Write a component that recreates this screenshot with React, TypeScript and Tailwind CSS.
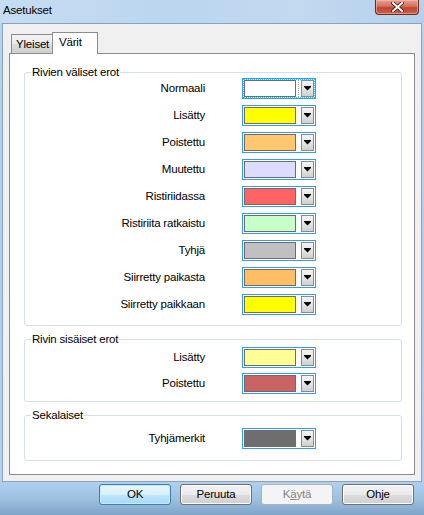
import React from 'react';

const font = "font-['Segoe_UI','Liberation_Sans',Arial,sans-serif] tracking-[-0.2px]";

type Row = { label: string; color: string };

const groups: { title: string; rows: Row[]; gap: string; mt: string; pb: string }[] = [
  {
    title: 'Rivien väliset erot',
    gap: 'gap-[6px]',
    mt: '-mt-[1px]',
    pb: 'pb-[10px]',
    rows: [
      { label: 'Normaali', color: '#ffffff' },
      { label: 'Lisätty', color: '#ffff00' },
      { label: 'Poistettu', color: '#ffc86e' },
      { label: 'Muutettu', color: '#dcdcff' },
      { label: 'Ristiriidassa', color: '#ff6464' },
      { label: 'Ristiriita ratkaistu', color: '#c8ffc8' },
      { label: 'Tyhjä', color: '#c0c0c0' },
      { label: 'Siirretty paikasta', color: '#ffbe64' },
      { label: 'Siirretty paikkaan', color: '#ffff00' },
    ],
  },
  {
    title: 'Rivin sisäiset erot',
    gap: 'gap-[5px]',
    mt: 'mt-[1px]',
    pb: 'pb-[7px]',
    rows: [
      { label: 'Lisätty', color: '#ffff96' },
      { label: 'Poistettu', color: '#c86464' },
    ],
  },
  {
    title: 'Sekalaiset',
    gap: 'gap-[5px]',
    mt: 'mt-[6px]',
    pb: 'pb-[11px]',
    rows: [{ label: 'Tyhjämerkit', color: '#6e6e6e' }],
  },
];

function ColorCombo({ color, focused }: { color: string; focused?: boolean }) {
  return (
    <div className="w-[74px] h-[21px] border border-[#3399ff] bg-white p-[1px] flex">
      <div
        className={`flex flex-1 ${focused ? 'outline outline-1 outline-dotted outline-[#33c4ff]' : ''}`}
      >
        <div className="w-[52px] h-full border border-[#6d6d6d]" style={{ background: color }} />
        <div className="w-[5px] flex justify-center">
          {focused && <div className="h-full border-l border-dotted border-[#9a9a9a]" />}
        </div>
        <div className="w-[13px] h-full border border-[#8b8b8b] bg-[linear-gradient(#f4f4f4,#e6e6e6_50%,#cfcfcf)] flex items-center justify-center">
          <svg width="7" height="5" viewBox="0 0 7 5">
            <polygon points="0,0 7,0 7,1 3.5,4.5 0,1" fill="#000" />
          </svg>
        </div>
      </div>
    </div>
  );
}

function Button({ label, primary, disabled }: { label: React.ReactNode; primary?: boolean; disabled?: boolean }) {
  const base = 'w-[72px] h-[21px] rounded-[3px] border text-[11.5px] flex items-center justify-center';
  const style = disabled
    ? 'border-[#adb2b5] bg-[#f4f4f4] text-[#838383]'
    : primary
      ? 'border-[#3c7fb1] bg-[linear-gradient(#eaf6fd,#d9f0fc_50%,#bee6fd_51%,#a7d9f5)] text-black shadow-[inset_0_0_0_1px_#c3ecfb]'
      : 'border-[#707070] bg-[linear-gradient(#f2f2f2,#ebebeb_50%,#dddddd_51%,#cfcfcf)] text-black shadow-[inset_0_0_0_1px_#fcfcfc]';
  return <div className={`${base} ${style}`}>{label}</div>;
}

export default function App() {
  return (
    <div
      className={`${font} w-[424px] h-[515px] overflow-hidden flex flex-col text-black bg-[linear-gradient(180deg,#c4dbf2_0%,#b7d3ef_5%,#aecdee_60%,#b2d3f4_93%,#9dbfe0_97%,#7fa4c8_100%)]`}
    >
      {/* title bar */}
      <div className="h-[23px] flex justify-between bg-[linear-gradient(90deg,#c6dcf2,#bcd6f0_40%,#c2d9f0_70%,#b5d0ec)]">
        <div className="pl-[3px] pt-[3px] text-[11.5px] leading-[15px]">Asetukset</div>
        <div className="mr-[5px] w-[44px] h-[15px] rounded-b-[4px] border border-t-0 border-[#6d2a1d] bg-[linear-gradient(#e4a194,#d2705f_45%,#c2452e_55%,#c9614c)] flex items-center justify-center shadow-[inset_0_0_0_1px_rgba(255,200,190,0.5)]">
          <svg width="13" height="10" viewBox="0 0 13 10">
            <path d="M2 1 L11 9 M11 1 L2 9" stroke="#4a1a12" strokeWidth="3.6" strokeLinecap="square" />
            <path d="M2 1 L11 9 M11 1 L2 9" stroke="#ffffff" strokeWidth="2" strokeLinecap="square" />
          </svg>
        </div>
      </div>

      {/* client area */}
      <div className="ml-[2px] w-[420px] h-[459px] border border-[#8da1b7] bg-[#f0f0f0] flex flex-col pt-[8px] px-[6px] pb-[6px]">
        <div className="flex items-end pl-[2px] text-[11.5px] leading-[15px]">
          <div className="w-[42px] h-[19px] border border-b-0 border-[#898c95] bg-[linear-gradient(#f2f2f2,#ebebeb_50%,#dddddd_51%,#cfcfcf)] pl-[4px] pt-[2px]">
            Yleiset
          </div>
          <div className="relative z-10 -ml-px -mb-px w-[46px] h-[22px] border border-b-0 border-[#898c95] bg-white pl-[6px] pt-[2px]">
            Värit
          </div>
        </div>
        <div className="flex-1 bg-white border border-[#898c95] pt-[11px] pl-[14px] pr-[12px] flex flex-col gap-[6px]">
          {groups.map((g, gi) => (
            <fieldset key={g.title} className={`border border-[#d5dfe5] rounded-[3px] m-0 p-0 ${g.pb}`}>
              <legend className="ml-[6px] px-[1px] text-[11.5px] leading-[14px]">{g.title}</legend>
              <div className={`flex flex-col ${g.gap} ${g.mt}`}>
                {g.rows.map((r, ri) => (
                  <div key={r.label + ri} className="flex items-center">
                    <div className="w-[180px] text-right text-[11.5px] leading-[15px]">{r.label}</div>
                    <div className="ml-[37px]">
                      <ColorCombo color={r.color} focused={gi === 0 && ri === 0} />
                    </div>
                  </div>
                ))}
              </div>
            </fieldset>
          ))}
        </div>
      </div>

      {/* buttons */}
      <div className="mt-[2px] flex justify-end gap-[9px] pr-[10px]">
        <Button label="OK" primary />
        <Button label="Peruuta" />
        <Button
          disabled
          label={
            <span>
              K<span className="underline">ä</span>ytä
            </span>
          }
        />
        <Button label="Ohje" />
      </div>
    </div>
  );
}
